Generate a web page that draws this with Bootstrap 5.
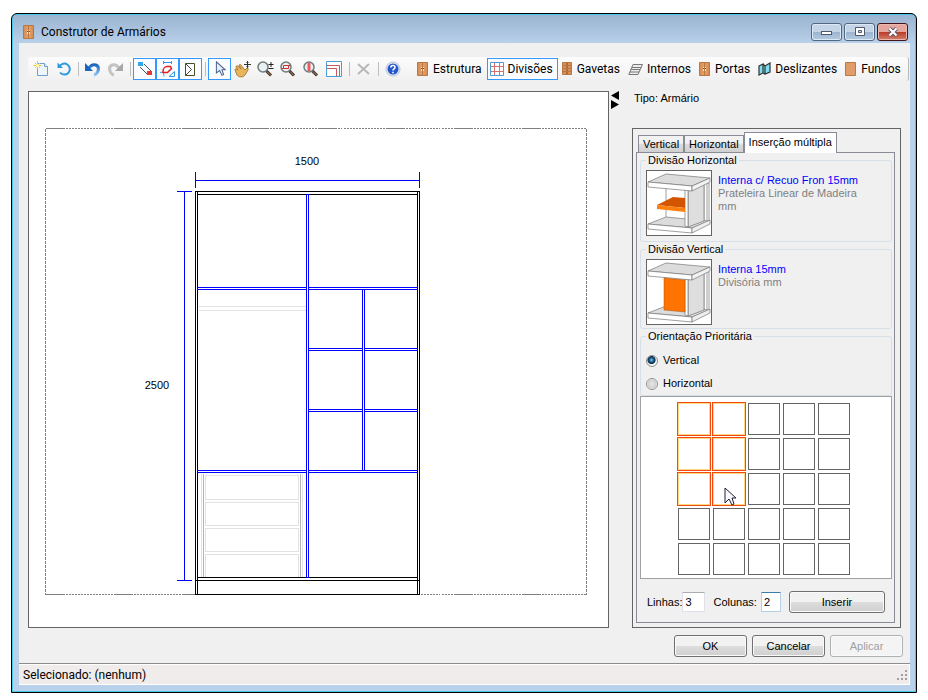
<!DOCTYPE html>
<html lang="pt-BR">
<head>
<meta charset="utf-8">
<meta name="viewport" content="width=device-width, initial-scale=1">
<title>Construtor de Armários</title>
<link href="https://cdn.jsdelivr.net/npm/bootstrap@5.3.0/dist/css/bootstrap.min.css" rel="stylesheet">
<style>
  body { background: #fff; color: #000; font: 11px/13px "Liberation Sans", Arial, sans-serif; padding: 13px 11px 8px 11px; }
  .ui-font { font-family: Roboto, "Segoe UI", sans-serif; font-size: 12px; line-height: 16px; }
  .window { min-width: 0; border: 1px solid #000; border-radius: 6px 6px 0 0; padding: 0 6px 7px 7px; background: linear-gradient(#99b2cf, #b9d1ea 30px); box-shadow: inset 0 0 0 1px #46c8e6; }
  .title-row { height: 29px; padding: 6px 2px 0 4px; gap: 6px; }
  .win-btns { gap: 2px; }
  .win-btn { width: 31px; height: 18px; padding: 0; border: 1px solid #53677e; border-radius: 3px; background: linear-gradient(#c4d5e8 50%, #9bb3ce 50%, #b4cbe3); box-shadow: inset 0 0 0 1px #dce8f4; }
  .win-close { border-color: #43141a; background: linear-gradient(#e5a79d 50%, #b93a27 50%, #d4826c); box-shadow: inset 0 0 0 1px #e9b9b0; }
  .client { background: #f0f0f0; }
  .tools { margin: 14px 1px 10px 9px; padding: 0 0 0 1px; height: 24px; background: linear-gradient(#fcfcfc, #f0f0f0); border-right: 1px solid #b8b8b8; border-radius: 3px; }
  .tool { width: 23px; height: 22px; padding: 0; border: 1px solid transparent; background: none; flex: none; }
  .tool-text { width: auto; padding: 0 4px 0 2px; gap: 4px; color: #000; white-space: nowrap; }
  .tool.on { border-color: #3399ff; background: #fafcff; }
  .tool:disabled { opacity: 1; }
  .sep { width: 6px; height: 14px; flex: none; background: linear-gradient(#bdbdbd, #bdbdbd) 3px 0 / 1px 14px no-repeat; }
  .tool-labels { padding-left: 10px; padding-right: 4px; }
  .workspace { padding: 0 9px; }
  .drawing { border: 1px solid #646464; background: #fff; min-width: 0; }
  .drawing svg { width: 100%; height: 100%; display: block; }
  .splitter { width: 23px; padding-left: 2px; }
  .side { width: 269px; }
  .kind { height: 37px; padding: 1px 2px 0; }
  .panel { border: 1px solid #646464; padding: 3px 5px 4px 3px; }
  .tab-strip { height: 20px; padding-left: 2px; }
  .tab-btn { height: 17px; padding: 0 4px; border: 1px solid #898c95; border-bottom: 0; color: #000; background: linear-gradient(#f2f2f2 45%, #dcdcdc 50%, #d0d0d0); white-space: nowrap; }
  .tab-btn.on { height: 21px; padding-bottom: 2px; background: #fff; margin-bottom: -1px; z-index: 1; }
  .page-box { border: 1px solid #898c95; padding: 0 2px 9px 3px; }
  .group { border: 1px solid #d5dfe5; border-radius: 3px; padding: 0 5px 5px; margin: 0; }
  .group legend { float: none; width: auto; font-size: 11px; line-height: 15px; margin: 0; padding: 0 2px; }
  .group-short { padding-bottom: 3px; }
  .group-opts { padding-top: 5px; padding-bottom: 0; }
  .thumb { width: 66px; height: 66px; border: 1px solid #646464; background: #fff; margin-top: 2px; flex: none; }
  .piece { padding: 6px 0 0 6px; }
  .piece-name { color: #0000ff; }
  .piece-kind { color: #808080; }
  .opt { height: 23px; gap: 5px; }
  .opt input { appearance: none; width: 12px; height: 12px; margin: 0; border: 1px solid #8e8f8f; border-radius: 50%; background: radial-gradient(#e8e8e8, #cfcfcf 60%, #fff 70%); }
  .opt input:checked { background: radial-gradient(circle at 45% 40%, #7fd0f0 0, #1d5f8d 25%, #0b2c4c 45%, #f4f4f4 55%); }
  .picker { border: 1px solid #a0a0a0; background: #fff; padding: 6px 4px 3px 0; }
  .cells { display: grid; grid-template-columns: repeat(5, 32px); gap: 3px; }
  .cell { height: 32px; padding: 0; border: 1px solid #646464; background: #fff; }
  .cell.on { border-color: #ffd983; box-shadow: 0 0 0 1px #f04a10; }
  .pointer { left: 10px; top: 13px; z-index: 2; }
  .amounts { padding: 12px 7px 0 7px; }
  .num { height: 20px; padding: 0 2px; border: 1px solid #e0e0ea; border-top-color: #abadb3; border-radius: 1px; background: #fff; width: 23px; }
  .num-focus { width: 20px; border-color: #b5cfe7; border-top-color: #3d7bad; }
  .push { height: 22px; padding: 0; border: 1px solid #707070; border-radius: 3px; color: #000; background: linear-gradient(#f2f2f2 48%, #dddddd 52%, #cfcfcf); box-shadow: inset 0 0 0 1px #fafafa; }
  .push:disabled { border-color: #adb2b5; color: #a0a0a0; background: #f4f4f4; }
  .footer-row { padding: 7px 7px 6px; gap: 5px; }
  .footer-row .push { width: 73px; }
  .status { border-top: 1px solid #8c8c8c; height: 22px; background: #f0eceb; box-shadow: inset 0 1px #fff, inset 0 -1px #fff, inset -1px 0 #fff; padding: 0 2px 0 4px; }
</style>
</head>
<body class="min-vh-100 d-flex">
<svg width="0" height="0" class="position-absolute" aria-hidden="true">
  <defs>
    <linearGradient id="wood"><stop stop-color="#d48a50"/><stop offset=".5" stop-color="#e6a36d"/><stop offset="1" stop-color="#d48a50"/></linearGradient>
    <linearGradient id="blueArc" x2="0" y2="1"><stop stop-color="#1767c0"/><stop offset="1" stop-color="#8fc6f5"/></linearGradient>
    <symbol id="cabinet" viewBox="0 0 12 14"><path fill="url(#wood)" stroke="#b87743" d="M.5.5h10v13H.5zM5.500 1v12"/><path stroke="#f4e6dc" d="M4.500 5v4M6.500 5v4"/><path stroke="#555" d="M4.500 6v1M6.500 6v1"/></symbol>
    <symbol id="lens" viewBox="0 0 17 16"><path d="M9 9.500l5 5" stroke="#3e3430" stroke-width="3"/><path d="M10 10.500l4 4" stroke="#c58a52" stroke-width="1"/><circle cx="6" cy="6" r="5" fill="#e9f0f2" stroke="#707a7c" stroke-width="1.500"/></symbol>
    <symbol id="frame3d" viewBox="0 0 64 64">
      <g stroke="#777" stroke-width=".7" stroke-linejoin="round">
        <path fill="#fff" d="M57 12h5v38l-5 3zM60 13v38"/>
        <path fill="#dcdcdc" d="M1 53l18-7 21 2 22 2-17 7z"/>
        <path fill="#fff" d="M1 53l44 4v5L1 58z"/>
        <path fill="#eee" d="M45 57l18-8v4l-18 9z"/>
        <path fill="none" d="M19 17v29"/>
        <path fill="#dedede" d="M41 20l16-7v37l-16 6z"/>
        <path fill="#fff" d="M38 19h3v37l-3-1z"/>
        <path fill="#dcdcdc" d="M1 11l18-8 44 4-18 8z"/>
        <path fill="#fff" d="M1 11l44 4v5L1 16z"/>
        <path fill="#f2f2f2" d="M45 15l18-8v4l-18 9z"/>
      </g>
    </symbol>
    <symbol id="arrow" viewBox="0 0 13 20"><path d="M1 1v15l4-4 3 6 2-1-2-6h4z" fill="#f7f7fb" stroke="#20203a"/></symbol>
  </defs>
</svg>
<main class="window flex-grow-1 d-flex flex-column">
  <header class="title-row d-flex align-items-center ui-font">
    <svg width="12" height="14" aria-hidden="true"><use href="#cabinet"/></svg>
    <span class="flex-grow-1">Construtor de Armários</span>
    <div class="win-btns d-flex">
      <button class="win-btn d-flex align-items-center justify-content-center" aria-label="Minimizar"><svg width="13" height="8"><rect x="1.500" y="3.500" width="10" height="3" fill="#fff" stroke="#53586a"/></svg></button>
      <button class="win-btn d-flex align-items-center justify-content-center" aria-label="Maximizar"><svg width="12" height="10"><path fill="#fff" stroke="#53586a" fill-rule="evenodd" d="M1.500.5h9v8h-9zM4.500 3.500h3v2h-3z"/></svg></button>
      <button class="win-btn win-close d-flex align-items-center justify-content-center" aria-label="Fechar"><svg width="12" height="10"><path d="M2.500 1.500l7 7M9.500 1.500l-7 7" stroke="#53586a" stroke-width="4"/><path d="M2.500 1.500l7 7M9.500 1.500l-7 7" stroke="#fff" stroke-width="2.200"/></svg></button>
    </div>
  </header>

  <div class="client flex-grow-1 d-flex flex-column">
    <nav class="tools d-flex align-items-center ui-font" aria-label="Ferramentas">
      <button class="tool d-flex align-items-center justify-content-center" aria-label="Novo"><svg width="16" height="16"><path d="M4.500 2.500h7l3 3v9h-10z" fill="#eef5fd" stroke="#6e9fd0"/><path d="M11.500 2.500v3h3" fill="#fff" stroke="#6e9fd0"/><path d="M4.500 0v8M.5 4.500h8M2 2l5 5M7 2L2 7" stroke="#e8c321"/><circle cx="4.500" cy="4.500" r="1.500" fill="#fffbd0"/></svg></button>
      <button class="tool d-flex align-items-center justify-content-center" aria-label="Recarregar"><svg width="16" height="16"><path d="M3.500 5.500a5.500 5.500 0 1 1 .5 6" fill="none" stroke="#2f9ae0" stroke-width="2"/><path d="M1.500 1.500v5.500h5.500z" fill="#2f9ae0"/></svg></button>
      <span class="sep"></span>
      <button class="tool d-flex align-items-center justify-content-center" aria-label="Desfazer"><svg width="17" height="16"><path d="M5 7c4-6 11-3 9 3-.5 2-2 3.500-4 4" fill="none" stroke="url(#blueArc)" stroke-width="3"/><path d="M1 2v8h8z" fill="#1767c0"/></svg></button>
      <button class="tool d-flex align-items-center justify-content-center" disabled aria-label="Refazer"><svg width="17" height="16"><path d="M12 7C8 1 1 4 3 10c.5 2 2 3.500 4 4" fill="none" stroke="#c4c4c4" stroke-width="3"/><path d="M16 2v8H8z" fill="#a8a8a8"/></svg></button>
      <span class="sep"></span>
      <button class="tool on d-flex align-items-center justify-content-center" aria-label="Encaixes"><svg width="16" height="16"><path fill="#30a8ec" d="M1 1h5v4H1z"/><path fill="#e83a2c" d="M10 10h5v4h-5z"/><path d="M7 3l7 7M3 6l7 7" stroke="#222" stroke-width=".8"/></svg></button>
      <button class="tool on d-flex align-items-center justify-content-center" aria-label="Medidas"><svg width="17" height="17"><path d="M4 1.500h9M4.500 0v3M12.500 0v3M1 11.500c3-1 4 1 4 4M10 15.500h5.500v-5z" fill="none" stroke="#2f9ae0"/><path d="M4 10.500c0-3 2-5 4-5h3.500l1 2-4 4H4z" fill="#fff" stroke="#dd2020" stroke-width="1.500"/></svg></button>
      <button class="tool on d-flex align-items-center justify-content-center" aria-label="Abertura"><svg width="11" height="15"><path d="M.5 1.500h9v12h-9zM.5 1.500l6 6-6 6" fill="none" stroke="#495024"/></svg></button>
      <span class="sep"></span>
      <button class="tool on d-flex align-items-center justify-content-center" aria-label="Selecionar"><svg width="12" height="16" viewBox="0 0 13 20"><path d="M2 1v14l4-3 3 6 2-1-2-6h4z" fill="#e6effb" stroke="#50668d" stroke-width="1.300"/></svg></button>
      <button class="tool d-flex align-items-center justify-content-center" aria-label="Mover"><svg width="17" height="17"><path d="M1 9c0-2 2-1 3 0L2 6c0-2 2-1 2-1l3 3-2-4c1-1 2 0 2 0l3 4 1 1 2-2c2 0 1 2 1 2l-3 5c-2 3-7 2-8 0z" fill="#e8b45c" stroke="#9b6a25" stroke-width=".8"/><path d="M13.500 0v7M10 3.500h7M12.500 1.500h2M12.500 5.500h2" stroke="#333"/></svg></button>
      <button class="tool d-flex align-items-center justify-content-center" aria-label="Zoom"><svg width="17" height="16"><use href="#lens" width="17" height="16"/><path d="M14 1v5M11.500 3.500h5M11.500 7.500h5" stroke="#222"/></svg></button>
      <button class="tool d-flex align-items-center justify-content-center" aria-label="Zoom em janela"><svg width="17" height="16"><use href="#lens" width="17" height="16"/><path d="M3.500 4.500h5v3h-5zM2 7.500h2M8 4.500h2" fill="none" stroke="#c33"/></svg></button>
      <button class="tool d-flex align-items-center justify-content-center" aria-label="Zoom total"><svg width="17" height="16"><use href="#lens" width="17" height="16"/><path d="M6 2v8" stroke="#f05a5a" stroke-width="3"/></svg></button>
      <button class="tool d-flex align-items-center justify-content-center" aria-label="Perfil"><svg width="17" height="17"><path fill="#fff" stroke="#4f9cd0" d="M.5.5h15v15H.500z"/><path d="M1 4.500h12.500V15M1 7.500h9.500V15" fill="none" stroke="#c65a5a"/></svg></button>
      <span class="sep"></span>
      <button class="tool d-flex align-items-center justify-content-center" disabled aria-label="Excluir"><svg width="15" height="14"><path d="M2 2l11 10M13 2L2 12" stroke="#b8b8b8" stroke-width="2"/></svg></button>
      <span class="sep"></span>
      <button class="tool d-flex align-items-center justify-content-center" aria-label="Ajuda"><svg width="16" height="16"><circle cx="8" cy="8" r="7" fill="#e3e9f5" stroke="#b9c4da"/><circle cx="8" cy="8" r="5.500" fill="#2458c8"/><path d="M5.800 6.500C6 3.500 10.500 4 10 6.500 9.800 8 8 7.800 8 9.500M8 10.800v1.500" fill="none" stroke="#fff" stroke-width="1.600"/></svg></button>
      <div class="tool-labels d-flex flex-grow-1 justify-content-between">
        <button class="tool tool-text d-flex align-items-center"><svg width="12" height="14"><use href="#cabinet"/></svg>Estrutura</button>
        <button class="tool tool-text on d-flex align-items-center"><svg width="14" height="14"><path fill="#fff" stroke="#4f9cd0" d="M.5.5h13v13H.500z"/><path d="M4.500 1v12M9.500 1v12M1 4.500h12M1 9.500h12" stroke="#d87070"/></svg>Divisões</button>
        <button class="tool tool-text d-flex align-items-center"><svg width="12" height="14"><path fill="#d98f55" stroke="#b87743" d="M1.500.5h9v12h-9zM1 3.500h10M1 6.500h10M1 9.500h10"/><path d="M5 2h2M5 5h2M5 8h2M5 11h2" stroke="#7c4a20"/></svg>Gavetas</button>
        <button class="tool tool-text d-flex align-items-center"><svg width="15" height="13"><path d="M5 1.500h9.500L10 11.500H.800zM4 4.500h9M3 6.500h9M2 9h9" fill="#eee" stroke="#777"/></svg>Internos</button>
        <button class="tool tool-text d-flex align-items-center"><svg width="12" height="14"><use href="#cabinet"/></svg>Portas</button>
        <button class="tool tool-text d-flex align-items-center"><svg width="13" height="14"><path fill="#7edff0" stroke="#333" stroke-width="1.200" d="M1 4l4-2v9l-4 2zM5 2l2 2v8l-2-1M7 4l5-3v9l-5 2z"/></svg>Deslizantes</button>
        <button class="tool tool-text d-flex align-items-center"><svg width="12" height="14"><path fill="#e09c69" stroke="#b97945" d="M.5.5h10v13H.500z"/></svg>Fundos</button>
      </div>
    </nav>

    <div class="workspace flex-grow-1 d-flex">
      <section class="drawing flex-grow-1 position-relative" aria-label="Vista frontal">
        <svg class="position-absolute" viewBox="29 92 579 535" role="img" aria-label="Armário 1500 x 2500">
          <g transform="translate(.5 .5)" fill="none" stroke="#000" shape-rendering="crispEdges">
            <path stroke="#808080" stroke-dasharray="19 1 2 1 2 1 2 1 2 1 2 1 2 1 2 1 2 1 2 1 2 1 2 1 2 1 2 1 2 1 2 1 2 1" d="M45 128H586M45 594H586"/>
            <path stroke="#808080" stroke-dasharray="3 1" d="M45 128V594M586 128V594"/>
            <path stroke="#e2e2e2" d="M198 306H306M198 310H306M201 473V577M302 473V577M205 475H298V499H205zM205 502H298V525H205zM205 528H298V551H205zM205 577V554H298V577"/>
            <path stroke="#b4b4b4" d="M203 473V577M300 473V577"/>
            <path stroke-linecap="square" d="M195 191H419V594H195zM197 191V594M417 191V594M197 194H417M197 577H417M195 580H419"/>
            <path stroke="#0000ff" stroke-linecap="square" d="M195 180H419M195 172V187M419 172V187M184 191V580M177 191H191M177 580H191M306 194V577M308 194V577M197 287H306M197 289H306M308 287H417M308 289H417M362 289V470M364 289V470M308 348H362M308 350H362M364 348H417M364 350H417M308 409H362M308 411H362M364 409H417M364 411H417M197 470H306M197 472H306M308 470H417M308 472H417"/>
          </g>
          <g font-size="11" text-anchor="middle"><text x="307" y="165">1500</text><text x="157" y="389">2500</text></g>
        </svg>
      </section>
      <div class="splitter" aria-hidden="true"><svg width="9" height="18"><path d="M8 0v9L0 4.500zM0 9v9l8-4.500z"/></svg></div>
      <aside class="side d-flex flex-column">
        <div class="kind">Tipo: Armário</div>
        <div class="panel flex-grow-1 d-flex flex-column">
          <div class="tab-strip d-flex align-items-end" role="tablist">
            <button class="tab-btn" role="tab">Vertical</button>
            <button class="tab-btn" role="tab">Horizontal</button>
            <button class="tab-btn on position-relative" role="tab" aria-selected="true">Inserção múltipla</button>
          </div>
          <div class="page-box flex-grow-1">
            <fieldset class="group">
              <legend>Divisão Horizontal</legend>
              <div class="d-flex">
                <svg class="thumb" viewBox="0 0 64 64" aria-hidden="true"><use href="#frame3d"/><path fill="#d45500" d="M10 34l16-8 12 1v10z"/><path fill="#ff7f0e" d="M10 34l28 3v4l-28-3z"/></svg>
                <div class="piece"><div class="piece-name">Interna c/ Recuo Fron 15mm</div><div class="piece-kind">Prateleira Linear de Madeira<br>mm</div></div>
              </div>
            </fieldset>
            <fieldset class="group group-short">
              <legend>Divisão Vertical</legend>
              <div class="d-flex">
                <svg class="thumb" viewBox="0 0 64 64" aria-hidden="true"><use href="#frame3d"/><path fill="#ff7300" stroke="#a85010" stroke-width=".5" d="M17 18l21 2v32l-21-2z"/></svg>
                <div class="piece"><div class="piece-name">Interna 15mm</div><div class="piece-kind">Divisória mm</div></div>
              </div>
            </fieldset>
            <fieldset class="group group-opts">
              <legend>Orientação Prioritária</legend>
              <label class="opt d-flex align-items-center"><input type="radio" name="dir" checked>Vertical</label>
              <label class="opt d-flex align-items-center"><input type="radio" name="dir">Horizontal</label>
            </fieldset>
            <div class="picker d-flex justify-content-center">
              <div class="cells">
                <button class="cell on" aria-label="1 x 1"></button><button class="cell on" aria-label="1 x 2"></button><button class="cell" aria-label="1 x 3"></button><button class="cell" aria-label="1 x 4"></button><button class="cell" aria-label="1 x 5"></button>
                <button class="cell on" aria-label="2 x 1"></button><button class="cell on" aria-label="2 x 2"></button><button class="cell" aria-label="2 x 3"></button><button class="cell" aria-label="2 x 4"></button><button class="cell" aria-label="2 x 5"></button>
                <button class="cell on" aria-label="3 x 1"></button><button class="cell on position-relative" aria-label="3 x 2"><svg class="pointer position-absolute" width="13" height="20"><use href="#arrow"/></svg></button><button class="cell" aria-label="3 x 3"></button><button class="cell" aria-label="3 x 4"></button><button class="cell" aria-label="3 x 5"></button>
                <button class="cell" aria-label="4 x 1"></button><button class="cell" aria-label="4 x 2"></button><button class="cell" aria-label="4 x 3"></button><button class="cell" aria-label="4 x 4"></button><button class="cell" aria-label="4 x 5"></button>
                <button class="cell" aria-label="5 x 1"></button><button class="cell" aria-label="5 x 2"></button><button class="cell" aria-label="5 x 3"></button><button class="cell" aria-label="5 x 4"></button><button class="cell" aria-label="5 x 5"></button>
              </div>
            </div>
            <div class="amounts d-flex align-items-center">
              <label for="rows">Linhas:</label><input id="rows" class="num" value="3">
              <label for="cols" class="ms-2">Colunas:</label><input id="cols" class="num num-focus ms-1" value="2">
              <button class="push flex-grow-1 ms-2">Inserir</button>
            </div>
          </div>
        </div>
      </aside>
    </div>
    <div class="footer-row d-flex justify-content-end">
      <button class="push">OK</button><button class="push">Cancelar</button><button class="push" disabled>Aplicar</button>
    </div>
    <footer class="status d-flex align-items-center justify-content-between ui-font">
      <span>Selecionado: (nenhum)</span>
      <svg class="align-self-end mb-1" width="11" height="11" aria-hidden="true"><path fill="#a0a0a0" d="M8 0h2v2H8zM4 4h2v2H4zM8 4h2v2H8zM0 8h2v2H0zM4 8h2v2H4zM8 8h2v2H8z"/></svg>
    </footer>
  </div>
</main>
<script src="https://cdn.jsdelivr.net/npm/bootstrap@5.3.0/dist/js/bootstrap.bundle.min.js"></script>
</body>
</html>
